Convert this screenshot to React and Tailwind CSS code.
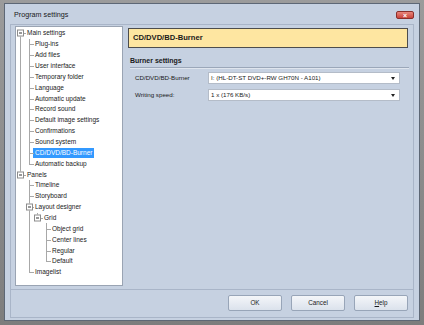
import React from "react";

const tree = [
  {
    label: "Main settings",
    children: [
      "Plug-ins",
      "Add files",
      "User interface",
      "Temporary folder",
      "Language",
      "Automatic update",
      "Record sound",
      "Default image settings",
      "Confirmations",
      "Sound system",
      { label: "CD/DVD/BD-Burner", selected: true },
      "Automatic backup",
    ],
  },
  {
    label: "Panels",
    children: [
      "Timeline",
      "Storyboard",
      {
        label: "Layout designer",
        children: [
          {
            label: "Grid",
            children: ["Object grid", "Center lines", "Regular", "Default"],
          },
        ],
      },
      "Imagelist",
    ],
  },
];

// flatten tree into rows with guide info for the connector lines
function flatten(nodes, level, guides, out) {
  nodes.forEach((n, i) => {
    const node = typeof n === "string" ? { label: n } : n;
    const last = i === nodes.length - 1;
    const first = level === 0 && i === 0;
    out.push({ ...node, level, last, first, guides });
    if (node.children) flatten(node.children, level + 1, [...guides, !last], out);
  });
  return out;
}

const rows = flatten(tree, 0, [], []);
const colWidths = ["w-[9px]", "w-[8px]", "w-[9px]", "w-[8px]"];

function TreeRow({ row }) {
  return (
    <div className="flex h-[10.86px] items-stretch">
      {row.guides.map((g, i) => (
        <div key={i} className={`relative shrink-0 ${colWidths[i]}`}>
          {g && <div className="absolute left-[4px] top-0 bottom-0 w-px bg-[#a8a8a8]" />}
        </div>
      ))}
      <div className={`relative shrink-0 ${colWidths[row.level]}`}>
        {!row.first && <div className="absolute left-[4px] top-0 h-1/2 w-px bg-[#a8a8a8]" />}
        {!row.last && <div className="absolute left-[4px] top-1/2 bottom-0 w-px bg-[#a8a8a8]" />}
        <div className="absolute left-[4px] right-[-1px] top-1/2 h-px bg-[#a8a8a8]" />
        {row.children && (
          <div className="absolute left-[1px] top-1/2 -translate-y-1/2 w-[7px] h-[7px] border border-[#8c8c8c] bg-white flex items-center justify-center">
            <div className="w-[3px] h-px bg-[#333]" />
          </div>
        )}
      </div>
      <div className="flex items-center ml-[2px]">
        <span
          className={
            row.selected
              ? "bg-[#3399ff] text-white px-[2px] -ml-[2px] leading-[10px]"
              : "text-[#1a1a1a] leading-[10px]"
          }
        >
          {row.label}
        </span>
      </div>
    </div>
  );
}

function Combo({ value }) {
  return (
    <div className="w-[192px] h-[12px] bg-white border border-[#b4bcc8] flex items-center justify-between pl-[2px] pr-[4px]">
      <span className="text-[6.2px] text-[#1a1a1a]">{value}</span>
      <span className="w-0 h-0 border-l-[2px] border-r-[2px] border-t-[3px] border-l-transparent border-r-transparent border-t-[#222]" />
    </div>
  );
}

function Btn({ children }) {
  return (
    <button className="w-[54px] h-[16px] rounded-[2px] border border-[#98a5b8] bg-gradient-to-b from-[#f4f6f9] to-[#dbe2ec] text-[6.3px] text-[#1a1a1a]">
      {children}
    </button>
  );
}

export default function App() {
  return (
    <div
      className="w-[424px] h-[325px] bg-gradient-to-b from-[#9b9b9b] to-[#7d7d7d] pt-[3px] pl-[4px] overflow-hidden"
      style={{ fontFamily: '"Liberation Sans", Arial, sans-serif' }}
    >
      <div className="w-[416px] h-[318px] border border-[#5d6775] bg-[#c6d1e1] flex flex-col">
        {/* Title bar */}
        <div className="h-[20px] shrink-0 flex items-center justify-between pl-[9px] pr-[5px] pt-[2px]">
          <span className="text-[7.2px] text-[#1a1a1a]">Program settings</span>
          <div className="w-[18px] h-[8px] rounded-[2px] border border-[#8a2f2a] bg-gradient-to-b from-[#e8867c] to-[#c9423a] flex items-center justify-center">
            <span className="text-white text-[7px] font-bold leading-none">×</span>
          </div>
        </div>

        {/* Content frame */}
        <div className="mx-[5px] mb-[2px] flex-1 border border-[#a9b5c8] flex flex-col">
          <div className="flex pl-[4px] pt-[1px] h-[265px] shrink-0 border-b border-[#a9b5c8]">
            {/* Tree */}
            <div className="w-[108px] h-[260px] shrink-0 bg-white border border-[#9aa4b3] pt-[1px] text-[6.5px]">
              {rows.map((r, i) => (
                <TreeRow key={i} row={r} />
              ))}
            </div>

            {/* Right pane */}
            <div className="ml-[5px] flex-1 pt-[2px]">
              <div className="w-[280px] h-[20px] bg-[#fee6a1] border border-[#4d4d4d] flex items-center pl-[4px]">
                <span className="text-[7.6px] font-bold text-[#1a1a1a]">CD/DVD/BD-Burner</span>
              </div>
              <div className="mt-[8px] pl-[2px] pr-[4px]">
                <div className="text-[7px] font-bold text-[#1a1a1a] leading-[10px]">Burner settings</div>
                <div className="h-px bg-[#9ba7b9] mt-[1px]" />
                <div className="h-px bg-[#dfe5ee]" />
              </div>
              <div className="mt-[3px] pl-[7px] flex flex-col gap-[5px]">
                <div className="flex items-center">
                  <span className="w-[73px] text-[6.2px] text-[#1a1a1a]">CD/DVD/BD-Burner</span>
                  <Combo value="I: (HL-DT-ST DVD+-RW GH70N - A101)" />
                </div>
                <div className="flex items-center">
                  <span className="w-[73px] text-[6.2px] text-[#1a1a1a]">Writing speed:</span>
                  <Combo value="1 x (176 KB/s)" />
                </div>
              </div>
            </div>
          </div>

          {/* Buttons */}
          <div className="flex-1 flex items-start justify-end gap-[9px] pt-[5px] pr-[5px]">
            <Btn>OK</Btn>
            <Btn>Cancel</Btn>
            <Btn>
              <span className="underline">H</span>elp
            </Btn>
          </div>
        </div>
      </div>
    </div>
  );
}
